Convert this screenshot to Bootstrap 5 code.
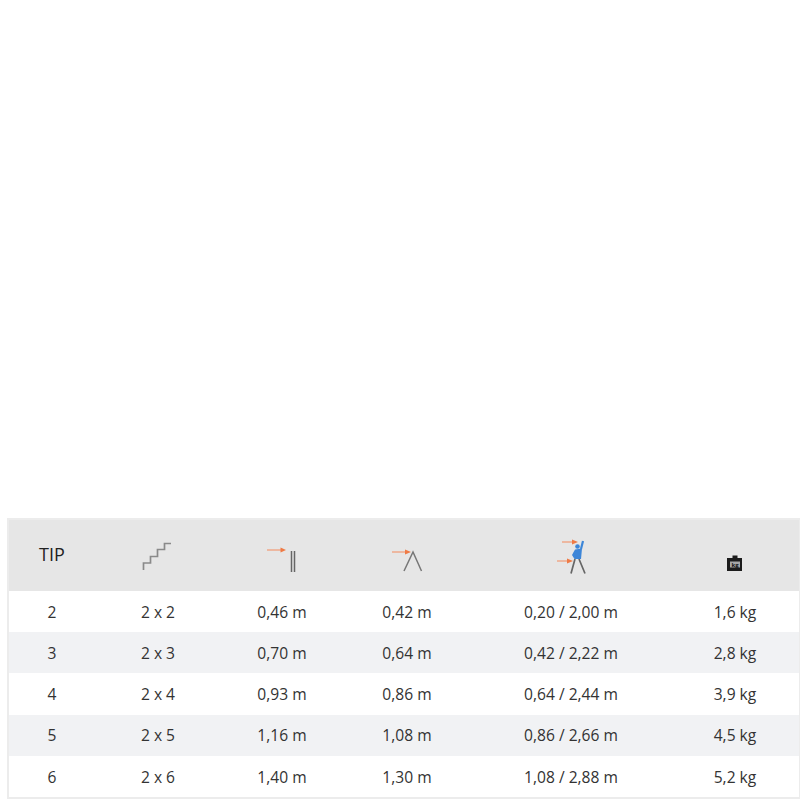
<!DOCTYPE html>
<html lang="hr">
<head>
<meta charset="utf-8">
<title>Tablica</title>
<link href="https://cdn.jsdelivr.net/npm/bootstrap@5.3.0/dist/css/bootstrap.min.css" rel="stylesheet">
<style>
html,body{background:#fff;margin:0;height:800px;overflow:hidden}
.page-wrap{padding:518px 0 0 7px;width:800px}
.spec-box{border:2px solid #ececec;border-right-width:1px;width:793px;box-sizing:border-box}
.spec-table{table-layout:fixed;width:100%;margin:0;font-family:"Open Sans",sans-serif;font-size:15.6px;--bs-table-color:#333}
.spec-table th,.spec-table td{border:0;padding:0;text-align:center;vertical-align:middle}
.spec-table thead th{background:#e6e6e6;height:71px;font-weight:400;font-size:18px;color:#222}
.spec-table tbody td{height:41.2px;padding-top:2px}
.spec-table tbody tr:nth-child(even) td{background:#f1f2f4}
.spec-table svg{display:block;margin:0 auto}
.spec-table svg.kg-icon{margin-top:14px}
.kg-label{font-family:"Open Sans",sans-serif;font-size:6px;font-weight:700}
.spec-tip{padding-bottom:2px!important}
.c1{width:86px}.c2{width:126px}.c3{width:122px}.c4{width:128px}.c5{width:200px}
</style>
</head>
<body>
<div class="page-wrap">
<div class="spec-box">
<table class="table spec-table">
<colgroup><col class="c1"><col class="c2"><col class="c3"><col class="c4"><col class="c5"><col></colgroup>
<thead>
<tr>
<th class="spec-tip">TIP</th>
<th>
<svg width="34" height="34" viewBox="0 0 34 34" fill="none"><path d="M2.500 31V24H9.500V17.500H16.500V10.500H23.500V4.500H30" stroke="#8a8a8a" stroke-width="1.700"/></svg>
</th>
<th>
<svg width="34" height="36" viewBox="0 0 34 36" fill="none"><path d="M2 12H17" stroke="#f2a07c" stroke-width="1.300"/><path d="M21 12L15.500 9.500V14.500Z" fill="#ef7a45"/><path d="M26.500 13V34M29.500 13V34" stroke="#666" stroke-width="1.500"/></svg>
</th>
<th>
<svg width="34" height="36" viewBox="0 0 34 36" fill="none"><path d="M2 14H16" stroke="#f2a07c" stroke-width="1.300"/><path d="M21 14L15 11.500V16.500Z" fill="#ef7a45"/><path d="M14 33L23 14L31.500 33" stroke="#777" stroke-width="1.500"/></svg>
</th>
<th>
<svg width="34" height="40" viewBox="0 0 34 40" fill="none"><path d="M8 6H19" stroke="#f2a07c" stroke-width="1.300"/><path d="M24 6L18 3.500V8.500Z" fill="#ef7a45"/><path d="M3 25H14" stroke="#f2a07c" stroke-width="1.300"/><path d="M19 25L13 22.500V27.500Z" fill="#ef7a45"/><path d="M21 23L17 37.500M25 23L31 37.500" stroke="#666" stroke-width="1.700"/><circle cx="23.500" cy="10.500" r="2.300" fill="#3d86d8"/><path d="M29 5L27 13" stroke="#3d86d8" stroke-width="2.200"/><path d="M21 13.500L28 12.500L27 23H20.500L18 19Z" fill="#3d86d8"/></svg>
</th>
<th>
<svg class="kg-icon" width="18" height="18" viewBox="0 0 18 18"><path d="M6.500 1.500H11.500V4H16V17H1V4H6.500Z" fill="#1c1c1c"/><rect x="4" y="7.500" width="10" height="6" fill="#a8a8a8"/><text class="kg-label" x="9" y="12.500" text-anchor="middle" fill="#111">kg</text></svg>
</th>
</tr>
</thead>
<tbody>
<tr><td>2</td><td>2 x 2</td><td>0,46 m</td><td>0,42 m</td><td>0,20 / 2,00 m</td><td>1,6 kg</td></tr>
<tr><td>3</td><td>2 x 3</td><td>0,70 m</td><td>0,64 m</td><td>0,42 / 2,22 m</td><td>2,8 kg</td></tr>
<tr><td>4</td><td>2 x 4</td><td>0,93 m</td><td>0,86 m</td><td>0,64 / 2,44 m</td><td>3,9 kg</td></tr>
<tr><td>5</td><td>2 x 5</td><td>1,16 m</td><td>1,08 m</td><td>0,86 / 2,66 m</td><td>4,5 kg</td></tr>
<tr><td>6</td><td>2 x 6</td><td>1,40 m</td><td>1,30 m</td><td>1,08 / 2,88 m</td><td>5,2 kg</td></tr>
</tbody>
</table>
</div>
</div>
<script src="https://cdn.jsdelivr.net/npm/bootstrap@5.3.0/dist/js/bootstrap.bundle.min.js"></script>
</body>
</html>
